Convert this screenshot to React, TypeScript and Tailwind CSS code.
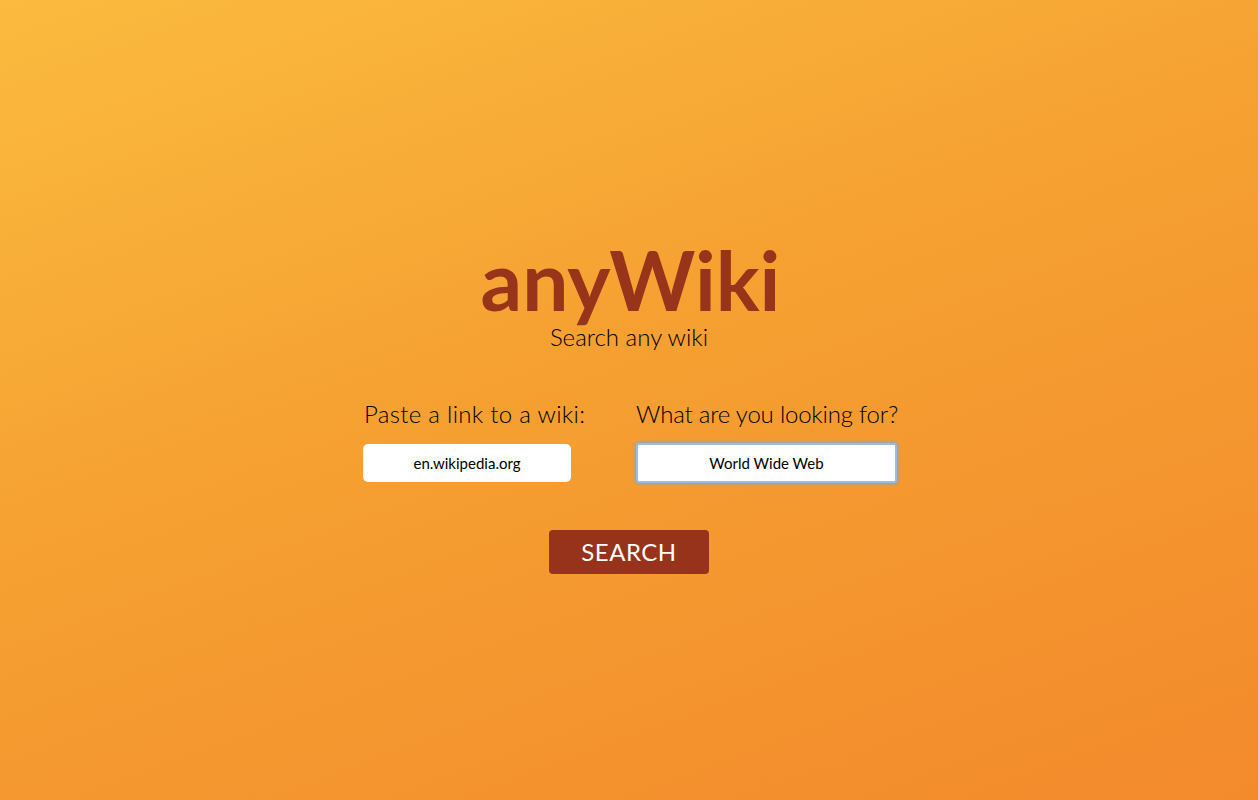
import React from 'react'

export default function App() {
  const [wiki, setWiki] = React.useState('en.wikipedia.org')
  const [query, setQuery] = React.useState('World Wide Web')

  return (
    <div className="min-h-[800px] w-full bg-[linear-gradient(160deg,#fbbb3f_0%,#f5a031_45%,#f38a2c_100%)] font-['Lato','Open_Sans',sans-serif] text-black flex flex-col items-center">
      {/* Header */}
      <div className="mt-[237px] ml-[3px] flex flex-col items-center">
        <h1 className="text-[82px] leading-[84px] font-bold text-[#97341a]">anyWiki</h1>
        <p className="mt-[1px] -ml-[3px] text-[24px] leading-[30px] font-light">Search any wiki</p>
      </div>

      {/* Form */}
      <div className="mt-[47px] flex items-start ml-[3px]">
        <div className="w-[272px] flex flex-col items-start">
          <label className="text-[24px] leading-[30px] font-light whitespace-nowrap tracking-[0.3px]">Paste a link to a wiki:</label>
          <input
            value={wiki}
            onChange={(e) => setWiki(e.target.value)}
            className="mt-[15px] -ml-[1px] w-[208px] h-[38px] rounded-[5px] bg-white text-center text-[15px] outline-none"
          />
        </div>
        <div className="w-[261px] flex flex-col items-start">
          <label className="text-[24px] leading-[30px] font-light whitespace-nowrap tracking-[-0.2px]">What are you looking for?</label>
          <input
            value={query}
            onChange={(e) => setQuery(e.target.value)}
            className="mt-[14px] w-[261px] h-[40px] rounded-[3px] bg-white text-center text-[15px] outline-none border-2 border-[#9bbde3] shadow-[0_0_3px_1px_#7aa6da]"
          />
        </div>
      </div>

      <button className="mt-[47px] w-[160px] h-[44px] rounded-[4px] bg-[#97331a] text-white text-[24px] tracking-[0.5px]">
        SEARCH
      </button>
    </div>
  )
}
